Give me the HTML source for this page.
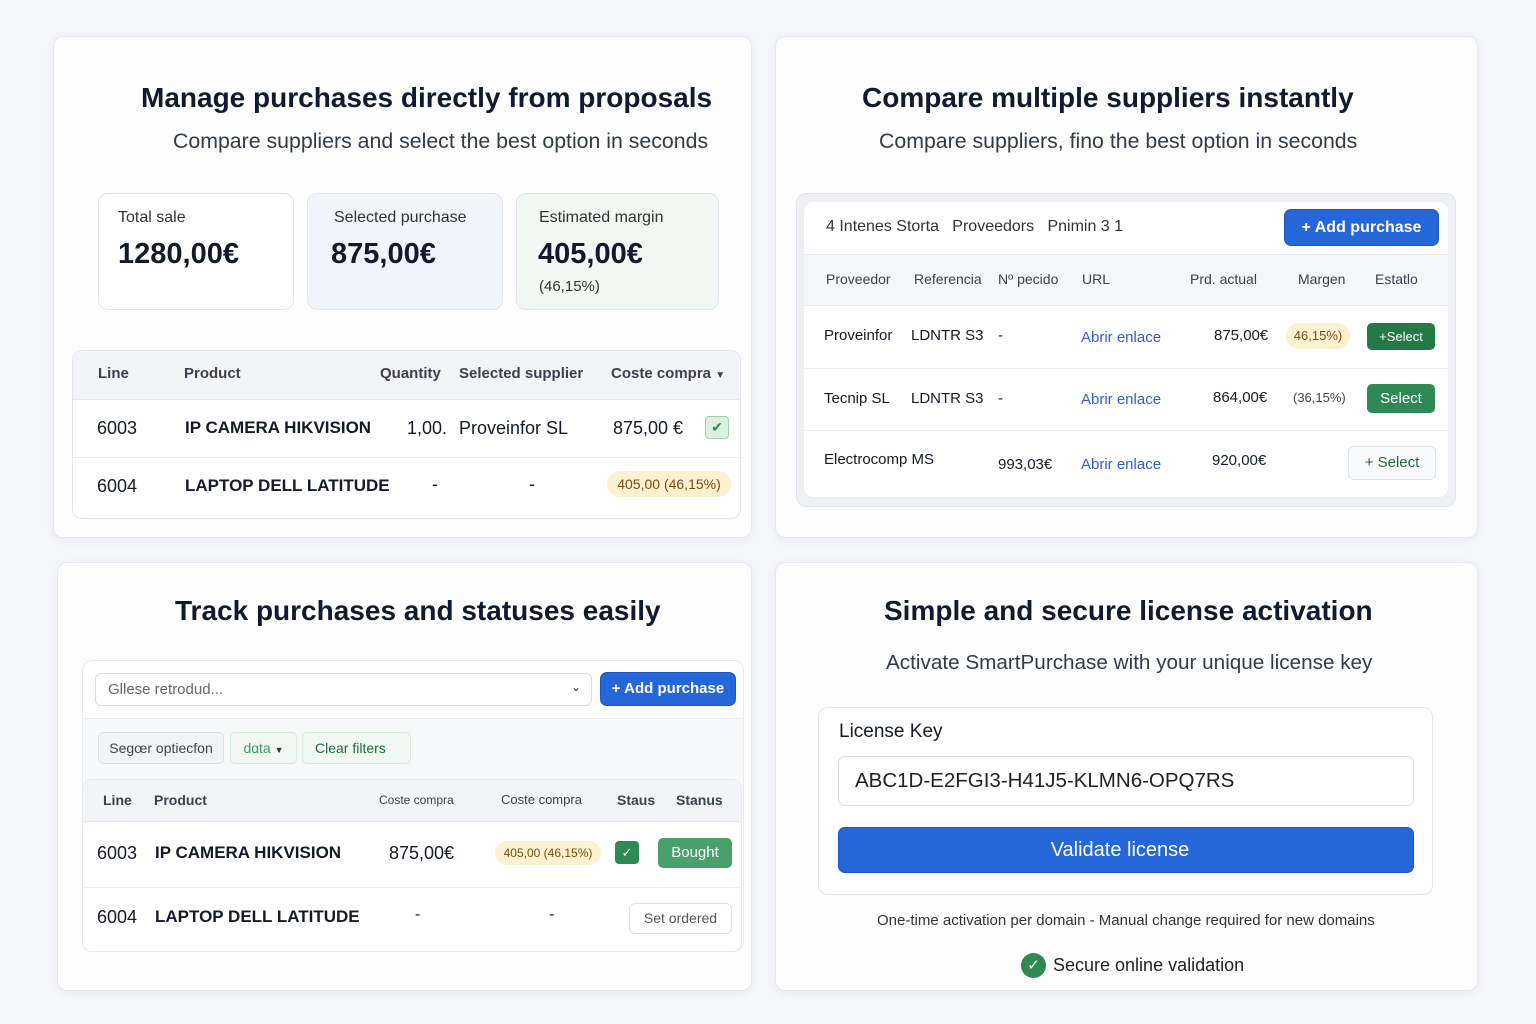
<!DOCTYPE html>
<html><head><meta charset="utf-8"><style>
*{box-sizing:border-box;margin:0;padding:0}
body{width:1536px;height:1024px;background:#f5f6f9;font-family:"Liberation Sans",sans-serif;color:#141a2b;position:relative;overflow:hidden}
.a{position:absolute;white-space:nowrap}
.card{position:absolute;background:#fdfdfe;border:1px solid #e4e7ee;border-radius:10px;box-shadow:0 2px 10px rgba(30,40,70,.05)}
.t{font-size:28px;font-weight:600;color:#121a2e;margin-top:2px}
.s{font-size:21.3px;color:#333a48}
.box{position:absolute;border:1px solid #e2e5ec;border-radius:10px}
.btnb{position:absolute;background:#2566d8;color:#fff;border-radius:7px;border:1px solid #1d55bf;text-align:center;font-weight:600}
.btng{position:absolute;background:#2e8a52;color:#fff;border-radius:5px;text-align:center}
.pill{position:absolute;background:#fdf1cf;color:#7a4b10;border-radius:14px;text-align:center}
.lnk{color:#2f5fd0}
.chk{position:absolute;border-radius:4px}
</style></head><body>

<!-- Card 1 -->
<div class="card" style="left:53px;top:36px;width:699px;height:502px"></div>
<div class="a t" style="left:141px;top:80px">Manage purchases directly from proposals</div>
<div class="a s" style="left:173px;top:129px">Compare suppliers and select the best option in seconds</div>
<div class="box" style="left:98px;top:193px;width:196px;height:117px;background:#fff"></div>
<div class="a" style="left:118px;top:209px;font-size:16px;color:#333">Total sale</div>
<div class="a" style="left:118px;top:238px;font-size:29px;font-weight:600">1280,00€</div>
<div class="box" style="left:307px;top:193px;width:196px;height:117px;background:#f1f4fa"></div>
<div class="a" style="left:334px;top:209px;font-size:16px;color:#333">Selected purchase</div>
<div class="a" style="left:331px;top:238px;font-size:29px;font-weight:600">875,00€</div>
<div class="box" style="left:516px;top:193px;width:203px;height:117px;background:#f1f7f3"></div>
<div class="a" style="left:539px;top:209px;font-size:16px;color:#333">Estimated margin</div>
<div class="a" style="left:538px;top:238px;font-size:29px;font-weight:600">405,00€</div>
<div class="a" style="left:539px;top:278px;font-size:15px;color:#333">(46,15%)</div>

<div class="box" style="left:72px;top:350px;width:669px;height:169px;background:#fff;overflow:hidden">
 <div style="height:49px;background:#f3f4f8;border-bottom:1px solid #e6e8ee"></div>
 <div style="position:absolute;top:106px;left:0;right:0;border-top:1px solid #eceef2"></div>
</div>
<div class="a" style="left:98px;top:365px;font-size:15px;font-weight:600;color:#3a4150">Line</div>
<div class="a" style="left:184px;top:365px;font-size:15px;font-weight:600;color:#3a4150">Product</div>
<div class="a" style="left:380px;top:365px;font-size:15px;font-weight:600;color:#3a4150">Quantity</div>
<div class="a" style="left:459px;top:365px;font-size:15px;font-weight:600;color:#3a4150">Selected supplier</div>
<div class="a" style="left:611px;top:365px;font-size:15px;font-weight:600;color:#3a4150">Coste compra <span style="font-size:10px">▼</span></div>
<div class="a" style="left:97px;top:418px;font-size:18px">6003</div>
<div class="a" style="left:185px;top:418px;font-size:17px;font-weight:600">IP CAMERA HIKVISION</div>
<div class="a" style="left:407px;top:418px;font-size:18px">1,00.</div>
<div class="a" style="left:459px;top:418px;font-size:18px">Proveinfor SL</div>
<div class="a" style="left:613px;top:418px;font-size:18px">875,00 €</div>
<div class="chk" style="left:705px;top:416px;width:24px;height:23px;background:#dcefe2;border:1px solid #9fcfae;color:#2e8a52;font-size:14px;text-align:center;line-height:21px">✔</div>
<div class="a" style="left:97px;top:476px;font-size:18px">6004</div>
<div class="a" style="left:185px;top:476px;font-size:17px;font-weight:600">LAPTOP DELL LATITUDE</div>
<div class="a" style="left:432px;top:474px;font-size:18px">-</div>
<div class="a" style="left:529px;top:474px;font-size:18px">-</div>
<div class="pill" style="left:607px;top:471px;width:124px;height:26px;font-size:14px;line-height:26px">405,00 (46,15%)</div>

<!-- Card 2 -->
<div class="card" style="left:775px;top:36px;width:703px;height:502px"></div>
<div class="a t" style="left:862px;top:80px">Compare multiple suppliers instantly</div>
<div class="a s" style="left:879px;top:129px">Compare suppliers, fino the best option in seconds</div>
<div class="box" style="left:796px;top:193px;width:660px;height:314px;background:#eef0f4"></div>
<div class="box" style="left:803px;top:201px;width:646px;height:297px;background:#fff;overflow:hidden;border-color:#eceef2">
 <div style="position:absolute;top:52px;left:0;right:0;height:52px;background:#f5f6f9;border-top:1px solid #e8eaef;border-bottom:1px solid #e8eaef"></div>
 <div style="position:absolute;top:166px;left:0;right:0;border-top:1px solid #eceef2"></div>
 <div style="position:absolute;top:228px;left:0;right:0;border-top:1px solid #eceef2"></div>
</div>
<div class="a" style="left:826px;top:218px;font-size:16px;color:#333">4 <span>Intenes</span> Storta &nbsp; Proveedors &nbsp; Pnimin 3 1</div>
<div class="btnb" style="left:1284px;top:209px;width:155px;height:37px;font-size:16px;line-height:36px">+ Add purchase</div>
<div class="a" style="left:826px;top:271px;font-size:14px;color:#3a4150">Proveedor</div>
<div class="a" style="left:914px;top:271px;font-size:14px;color:#3a4150">Referencia</div>
<div class="a" style="left:998px;top:271px;font-size:14px;color:#3a4150">Nº pecido</div>
<div class="a" style="left:1082px;top:271px;font-size:14px;color:#3a4150">URL</div>
<div class="a" style="left:1190px;top:271px;font-size:14px;color:#3a4150">Prd. actual</div>
<div class="a" style="left:1298px;top:271px;font-size:14px;color:#3a4150">Margen</div>
<div class="a" style="left:1375px;top:271px;font-size:14px;color:#3a4150">Estatlo</div>
<div class="a" style="left:824px;top:327px;font-size:15px">Proveinfor</div>
<div class="a" style="left:911px;top:327px;font-size:15px">LDNTR S3</div>
<div class="a" style="left:998px;top:327px;font-size:15px">-</div>
<div class="a lnk" style="left:1081px;top:329px;font-size:15px">Abrir enlace</div>
<div class="a" style="left:1214px;top:327px;font-size:15px">875,00€</div>
<div class="pill" style="left:1286px;top:323px;width:64px;height:26px;font-size:13px;line-height:26px">46,15%)</div>
<div class="btng" style="left:1367px;top:323px;width:68px;height:27px;font-size:13px;line-height:27px;background:#237a47">+Select</div>
<div class="a" style="left:824px;top:390px;font-size:15px">Tecnip SL</div>
<div class="a" style="left:911px;top:390px;font-size:15px">LDNTR S3</div>
<div class="a" style="left:998px;top:390px;font-size:15px">-</div>
<div class="a lnk" style="left:1081px;top:391px;font-size:15px">Abrir enlace</div>
<div class="a" style="left:1213px;top:389px;font-size:15px">864,00€</div>
<div class="a" style="left:1293px;top:390px;font-size:13px;color:#444">(36,15%)</div>
<div class="btng" style="left:1367px;top:384px;width:68px;height:29px;font-size:15px;line-height:29px">Select</div>
<div class="a" style="left:824px;top:451px;font-size:15px">Electrocomp MS</div>
<div class="a" style="left:998px;top:456px;font-size:15px">993,03€</div>
<div class="a lnk" style="left:1081px;top:456px;font-size:15px">Abrir enlace</div>
<div class="a" style="left:1212px;top:452px;font-size:15px">920,00€</div>
<div class="a" style="left:1348px;top:446px;width:88px;height:34px;border:1px solid #dde1e7;border-radius:6px;background:#f8fafb;color:#1f6b40;font-size:15px;text-align:center;line-height:32px">+ Select</div>

<!-- Card 3 -->
<div class="card" style="left:57px;top:562px;width:695px;height:429px"></div>
<div class="a t" style="left:175px;top:593px">Track purchases and statuses easily</div>
<div class="box" style="left:82px;top:660px;width:662px;height:292px;background:#f7f8fa;border-color:#e8eaef">
 <div style="position:absolute;left:0;right:0;top:0;height:58px;background:#fff;border-radius:10px 10px 0 0;border-bottom:1px solid #eceef2"></div>
</div>
<div class="a" style="left:95px;top:673px;width:497px;height:33px;border:1px solid #d9dde4;border-radius:6px;background:#fff;font-size:15px;color:#666;padding:7px 12px">Gllese retrodud...<span style="position:absolute;right:10px;top:6px;color:#333;font-size:12px">⌄</span></div>
<div class="btnb" style="left:600px;top:672px;width:136px;height:34px;font-size:15px;line-height:32px">+ Add purchase</div>
<div class="a" style="left:98px;top:732px;width:126px;height:32px;border:1px solid #dcdfe5;border-radius:5px;background:#f2f3f6;font-size:14px;color:#444;text-align:center;line-height:31px">Segœr optiecfon</div>
<div class="a" style="left:230px;top:732px;width:67px;height:32px;border:1px solid #d8e9dd;border-radius:5px;background:#f1f8f3;font-size:14px;color:#3d9a60;text-align:center;line-height:31px">dɑta <span style="font-size:9px;color:#333">▼</span></div>
<div class="a" style="left:302px;top:732px;width:109px;height:32px;border:1px solid #d8e9dd;border-radius:5px;background:#f1f8f3;font-size:14px;color:#1f6b40;padding-left:12px;line-height:31px">Clear filters</div>
<div class="box" style="left:82px;top:779px;width:660px;height:173px;background:#fff;overflow:hidden;border-color:#e8eaef">
 <div style="height:42px;background:#f3f4f7;border-bottom:1px solid #e6e8ee"></div>
 <div style="position:absolute;top:107px;left:0;right:0;border-top:1px solid #eceef2"></div>
</div>
<div class="a" style="left:103px;top:792px;font-size:14px;font-weight:600;color:#3a4150">Line</div>
<div class="a" style="left:154px;top:792px;font-size:14px;font-weight:600;color:#3a4150">Product</div>
<div class="a" style="left:379px;top:793px;font-size:12px;color:#3a4150">Coste compra</div>
<div class="a" style="left:501px;top:792px;font-size:13px;color:#3a4150">Coste compra</div>
<div class="a" style="left:617px;top:792px;font-size:14px;font-weight:600;color:#3a4150">Staus</div>
<div class="a" style="left:676px;top:792px;font-size:14px;font-weight:600;color:#3a4150">Stanus</div>
<div class="a" style="left:97px;top:843px;font-size:18px">6003</div>
<div class="a" style="left:155px;top:843px;font-size:17px;font-weight:600">IP CAMERA HIKVISION</div>
<div class="a" style="left:389px;top:843px;font-size:18px">875,00€</div>
<div class="pill" style="left:495px;top:841px;width:106px;height:24px;font-size:12px;line-height:24px">405,00 (46,15%)</div>
<div class="chk" style="left:615px;top:841px;width:24px;height:23px;background:#2e8a52;color:#fff;font-size:13px;text-align:center;line-height:23px">✓</div>
<div class="btng" style="left:658px;top:838px;width:74px;height:30px;font-size:15px;line-height:30px;background:#4aa06a">Bought</div>
<div class="a" style="left:97px;top:907px;font-size:18px">6004</div>
<div class="a" style="left:155px;top:907px;font-size:17px;font-weight:600">LAPTOP DELL LATITUDE</div>
<div class="a" style="left:415px;top:906px;font-size:16px">-</div>
<div class="a" style="left:549px;top:906px;font-size:16px">-</div>
<div class="a" style="left:629px;top:903px;width:103px;height:31px;border:1px solid #dde1e7;border-radius:6px;background:#fff;font-size:14px;color:#555;text-align:center;line-height:29px">Set ordered</div>

<!-- Card 4 -->
<div class="card" style="left:775px;top:562px;width:703px;height:429px"></div>
<div class="a t" style="left:884px;top:593px">Simple and secure license activation</div>
<div class="a s" style="left:886px;top:651px;font-size:20.7px">Activate SmartPurchase with your unique license key</div>
<div class="box" style="left:818px;top:707px;width:615px;height:188px;background:#fff"></div>
<div class="a" style="left:839px;top:721px;font-size:19px;font-weight:500">License Key</div>
<div class="a" style="left:838px;top:756px;width:576px;height:50px;border:1px solid #d9dde4;border-radius:7px;background:#fff;font-size:20.5px;padding:12px 16px;color:#222">ABC1D-E2FGI3-H41J5-KLMN6-OPQ7RS</div>
<div class="btnb" style="left:838px;top:827px;width:576px;height:46px;font-size:20px;font-weight:500;line-height:44px;padding-right:12px">Validate license</div>
<div class="a" style="left:877px;top:912px;font-size:15px;color:#333">One-time activation per domain - Manual change required for new domains</div>
<div class="a" style="left:1021px;top:953px;width:25px;height:25px;border-radius:50%;background:#2e8a52;color:#fff;font-size:15px;text-align:center;line-height:25px">✓</div>
<div class="a" style="left:1053px;top:955px;font-size:18px;color:#222">Secure online validation</div>
</body></html>
